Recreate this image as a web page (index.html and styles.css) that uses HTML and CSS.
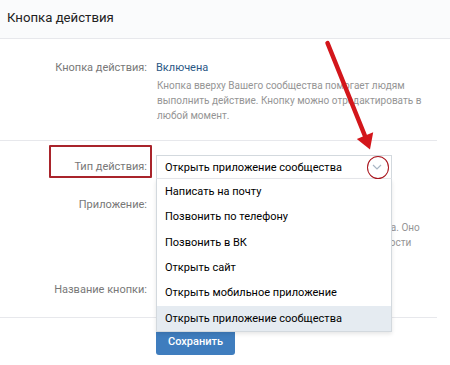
FILE: index.html
```html
<!DOCTYPE html>
<html lang="ru">
<head>
  <meta charset="UTF-8">
  <title>Кнопка действия</title>
  <meta name="viewport" content="width=device-width, initial-scale=1">
  <link rel="stylesheet" href="styles.css">
</head>
<body>
  <div class="page">
    <div class="head">Кнопка действия</div>

    <div class="section section-status">
      <div class="row">
        <div class="label">Кнопка действия:</div>
        <div class="value">
          <div class="status">Включена</div>
          <div class="hint">
            Кнопка вверху Вашего сообщества помогает людям<br>
            выполнить действие. Кнопку можно отредактировать в<br>
            любой момент.
          </div>
        </div>
      </div>
    </div>

    <div class="section section-form">
      <div class="row row-type">
        <span class="mark-box"></span>
        <div class="label">Тип действия:</div>
        <div class="value">
          <div class="select">
            <span class="select-text">Открыть приложение сообщества</span>
            <span class="select-arrow">
              <svg width="10" height="6" viewBox="0 0 10 6"><path d="M1 1l4 4 4-4" fill="none" stroke="#a9b6c4" stroke-width="1.2"/></svg>
            </span>
            <span class="mark-circle"></span>
            <ul class="menu">
              <li>Написать на почту</li>
              <li>Позвонить по телефону</li>
              <li>Позвонить в ВК</li>
              <li>Открыть сайт</li>
              <li>Открыть мобильное приложение</li>
              <li class="active">Открыть приложение сообщества</li>
            </ul>
          </div>
        </div>
      </div>

      <div class="row row-app">
        <div class="label">Приложение:</div>
        <div class="value">
          <div class="status">Не выбрано</div>
          <div class="hint hint-app">
            Приложение будет открыто по кнопке сообщества. Оно<br>
            должно быть доступно всем с учётом её приватности
          </div>
        </div>
      </div>

      <div class="row row-name">
        <div class="label">Название кнопки:</div>
        <div class="value">
          <div class="input">Открыть</div>
        </div>
      </div>
    </div>

    <div class="actions">
      <button class="btn">Сохранить</button>
    </div>

    <svg class="pointer" width="450" height="365" viewBox="0 0 450 365">
      <line x1="327.5" y1="43" x2="365" y2="136" stroke="#d3161b" stroke-width="4.5" stroke-linecap="round"/>
      <polygon points="356.8,139 373.2,132.2 370,149.5" fill="#d3161b"/>
    </svg>
  </div>
</body>
</html>
```

FILE: styles.css
```css
body {
  margin: 0;
  padding: 0;
  background: #fff;
  font-family: Roboto, 'Noto Sans', Arial, sans-serif;
  font-size: 11px;
  color: #000;
}
.page {
  position: relative;
  width: 450px;
  height: 365px;
  overflow: hidden;
}
.head {
  height: 39px;
  display: flex;
  align-items: center;
  padding: 0 0 4px 7px;
  box-sizing: border-box;
  background: #fafbfc;
  border-bottom: 1px solid #e7e8ec;
  font-size: 13.2px;
  color: #222;
}
.section {
  width: 437px;
  border-bottom: 1px solid #e7e8ec;
}
.section-status {
  padding: 20px 0 17px;
}
.section-form {
  padding: 14px 0 14px;
}
.row {
  position: relative;
  display: flex;
  gap: 9px;
}
.label {
  width: 147px;
  flex: none;
  text-align: right;
  font-size: 11px;
  line-height: 17px;
  color: #787878;
  white-space: nowrap;
}
.value {
  flex: 1;
}
.status {
  font-size: 11px;
  line-height: 17px;
  color: #2a5885;
}
.hint {
  margin-top: 2px;
  padding-left: 1px;
  font-size: 10px;
  line-height: 15px;
  color: #959595;
  white-space: nowrap;
}
.row-type .label {
  line-height: 24px;
}
.select {
  position: relative;
  width: 236px;
  height: 24px;
  box-sizing: border-box;
  border: 1px solid #d3d9de;
  border-bottom-color: #e7e8ec;
  display: flex;
  align-items: center;
  padding-left: 8px;
  background: #fff;
}
.select-text {
  flex: 1;
  color: #000;
  white-space: nowrap;
}
.select-arrow {
  width: 28px;
  display: flex;
  justify-content: center;
}
.select-arrow svg {
  display: block;
}
.menu {
  position: absolute;
  top: 23px;
  left: -1px;
  width: 236px;
  margin: 0;
  padding: 0;
  list-style: none;
  background: #fff;
  border: 1px solid #d3d9de;
  border-top: none;
  box-sizing: border-box;
  box-shadow: 0 2px 4px rgba(0, 0, 0, 0.1);
  z-index: 2;
}
.menu li {
  height: 25.33px;
  line-height: 25.33px;
  padding-left: 8px;
  white-space: nowrap;
}
.menu li.active {
  background: #e5ebf1;
}
.mark-box {
  position: absolute;
  left: 49px;
  top: -10px;
  width: 103px;
  height: 33px;
  box-sizing: border-box;
  border: 2px solid #a9242b;
  border-radius: 1px;
}
.mark-circle {
  position: absolute;
  left: 210px;
  top: 0;
  width: 22px;
  height: 23px;
  box-sizing: border-box;
  border: 1.5px solid #a8141c;
  border-radius: 50%;
  z-index: 3;
}
.row-app {
  margin-top: 16.5px;
}
.hint-app {
  margin-top: 7px;
}
.row-name {
  margin-top: 27.5px;
}
.row-name .label {
  line-height: 26px;
}
.input {
  width: 236px;
  height: 26px;
  box-sizing: border-box;
  border: 1px solid #d3d9de;
  padding-left: 8px;
  line-height: 24px;
}
.actions {
  padding: 9px 0 0 156px;
}
.btn {
  display: block;
  width: 79px;
  height: 28px;
  border: none;
  border-radius: 3px;
  background: #3f7dbe;
  color: #fff;
  font-family: Roboto, 'Noto Sans', Arial, sans-serif;
  font-size: 11px;
  font-weight: 500;
  padding: 0;
}
.pointer {
  position: absolute;
  left: 0;
  top: 0;
  pointer-events: none;
  z-index: 5;
}
```
